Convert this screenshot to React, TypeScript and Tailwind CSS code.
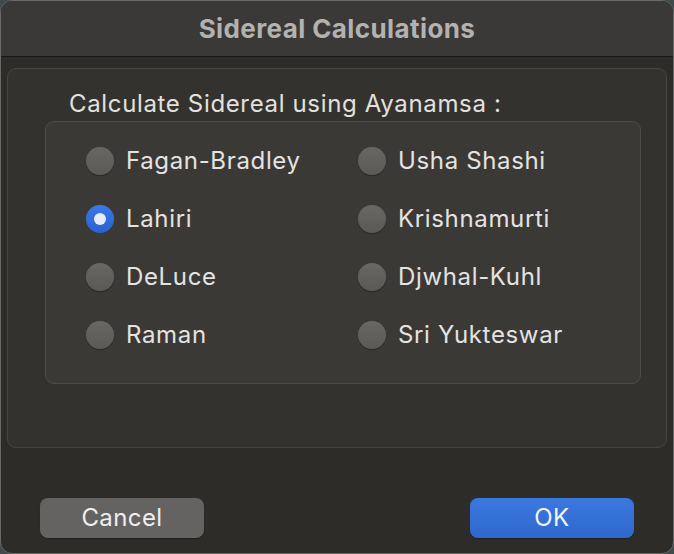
const options: [string, string][] = [
  ['Fagan-Bradley', 'Usha Shashi'],
  ['Lahiri', 'Krishnamurti'],
  ['DeLuce', 'Djwhal-Kuhl'],
  ['Raman', 'Sri Yukteswar'],
]

function Radio({ checked }: { checked?: boolean }) {
  if (checked) {
    return (
      <span className="flex h-[28px] w-[28px] shrink-0 items-center justify-center rounded-full bg-gradient-to-b from-[#3b78e6] to-[#2a62cf]">
        <span className="h-[12px] w-[12px] rounded-full bg-[#e6ecfb]" />
      </span>
    )
  }
  return (
    <span className="h-[28px] w-[28px] shrink-0 rounded-full bg-gradient-to-b from-[#686764] to-[#5a5956] shadow-[0_1px_1px_rgba(0,0,0,0.35)]" />
  )
}

export default function App() {
  const selected = 'Lahiri'

  return (
    <div className="h-[554px] w-[674px] bg-[#3f4a4b] font-['Inter','Liberation_Sans',sans-serif]">
      <div className="flex h-full w-full flex-col overflow-hidden rounded-[12px] border border-[#6a6a68] bg-[#2d2c29]">
        {/* Title bar */}
        <div className="flex h-[56px] shrink-0 items-center justify-center border-b border-[#161614] bg-[#3a3937]">
          <span className="text-[26px] font-bold tracking-[0.4px] text-[#b3b2b0]">Sidereal Calculations</span>
        </div>

        {/* Body */}
        <div className="flex flex-1 flex-col px-[6px] pt-[11px]">
          <div className="flex h-[380px] flex-col rounded-[9px] border border-[#464542] bg-[#33322f] pl-[37px] pr-[25px] pt-[21px]">
            <div className="pl-[24px] text-[24px] leading-[28px] tracking-[0.65px] text-[#e2e1df]">Calculate Sidereal using Ayanamsa :</div>
            <div className="mt-[3px] h-[263px] rounded-[9px] border border-[#4d4c49] bg-[#3a3936] pl-[40px] pt-[10px]">
              {options.map(([a, b]) => (
                <div key={a} className="grid h-[58px] grid-cols-[272px_1fr] items-center">
                  {[a, b].map(name => (
                    <div key={name} className="flex items-center gap-[12px]">
                      <Radio checked={name === selected} />
                      <span className="text-[24px] leading-[28px] tracking-[0.65px] text-[#e4e3e1]">{name}</span>
                    </div>
                  ))}
                </div>
              ))}
            </div>
          </div>

          {/* Buttons */}
          <div className="mt-[50px] flex justify-between pl-[33px] pr-[33px]">
            <button className="h-[40px] w-[164px] rounded-[8px] bg-[#646361] text-[24px] tracking-[0.4px] text-[#efefef] shadow-[0_1px_1px_rgba(0,0,0,0.3)]">
              Cancel
            </button>
            <button className="h-[40px] w-[164px] rounded-[8px] bg-gradient-to-b from-[#3a78e0] to-[#2f68cc] text-[24px] tracking-[0.4px] text-[#f2f4f8] shadow-[0_1px_1px_rgba(0,0,0,0.3)]">
              OK
            </button>
          </div>
        </div>
      </div>
    </div>
  )
}
